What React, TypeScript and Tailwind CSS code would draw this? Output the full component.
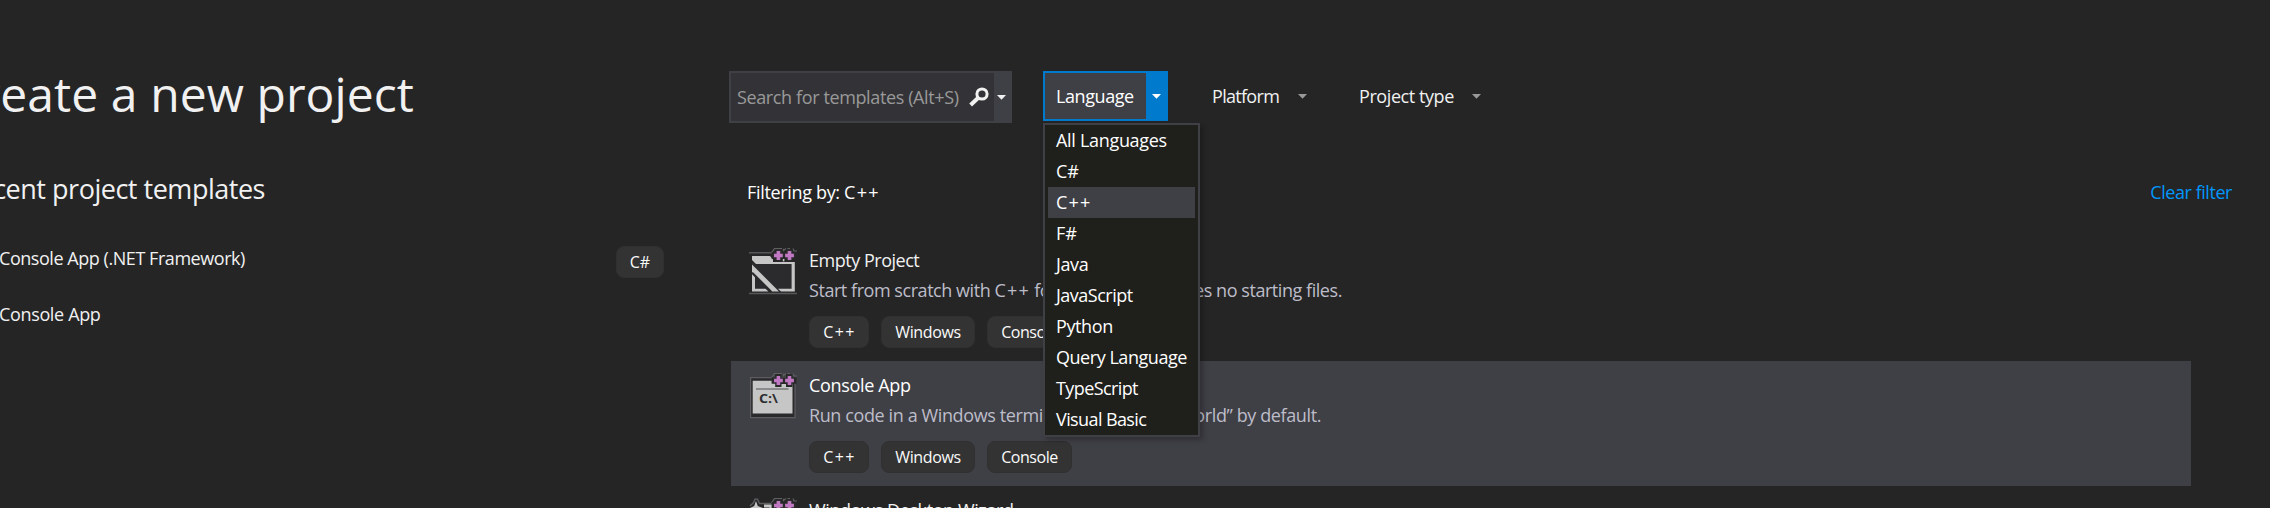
import type { ReactNode } from "react";

type Kind = "empty" | "console" | "wizard";

function Caret({ className }: { className: string }) {
  return (
    <svg width="9" height="5" viewBox="0 0 9 5" className={className}>
      <path d="M0 0H9L4.5 4.7Z" fill="currentColor" />
    </svg>
  );
}

function Cpp() {
  return <span className="tracking-[1.2px]">C++</span>;
}

function SearchIcon() {
  return (
    <svg width="20" height="20" viewBox="0 0 20 20" className="shrink-0 text-[#f1f1f1]">
      <circle cx="13" cy="7" r="5.1" fill="none" stroke="currentColor" strokeWidth="3" />
      <path d="M9.3 10.7L1.6 18" stroke="currentColor" strokeWidth="4" />
    </svg>
  );
}

function PlusBadge() {
  return (
    <g>
      <path
        d="M22 5.5L25.5 0.6H33M34.5 0.8V2.5L37 0.6M38.5 0.6H41M44 0.6L45 3H48"
        fill="none"
        stroke="#606062"
        strokeWidth="1.2"
      />
      <path
        d="M26.2 1H32.5V4.5H37V1H43.5V4.2H47.5V10.8H43.5V14H37V11H32.5V14H26.2V10.8H22.6V4.2H26.2Z"
        fill="#29292a"
      />
      <path
        d="M29.4 3V12M25 7.5H33.8M40.5 3V12M36.1 7.5H44.9"
        fill="none"
        stroke="#c078c2"
        strokeWidth="3.6"
      />
    </g>
  );
}

function ProjectIcon({ kind }: { kind: Kind }) {
  return (
    <svg width="48" height="48" viewBox="0 0 48 48" className="mt-3 ml-[18px] shrink-0">
      {kind === "empty" && (
        <g>
          <path d="M0 4.8H22M0 45.5H48" stroke="#57575a" strokeWidth="1.5" />
          <path d="M3 14H45V43H3Z" fill="#2b2b2e" />
          <path
            d="M3 8H21L24 11.5V14H45.8V43.5H32L29 40.8H42.6V16H7L3 12Z"
            fill="#c6c6c6"
          />
          <path d="M3 23L6 26V40.8H16.5L19.5 43.5H3Z" fill="#c6c6c6" />
          <path d="M3 16.5L30 43.5H23L3 23.5Z" fill="#c6c6c6" />
          <path d="M3 24.8L22 43.8" stroke="#29292b" strokeWidth="2.2" />
          <path d="M34.6 13.4V11" stroke="#c6c6c6" strokeWidth="1.6" />
        </g>
      )}
      {kind === "console" && (
        <g>
          <path d="M1.6 4.6H46V44.6H1.6Z" fill="#2a2a2c" stroke="#5e5e61" strokeWidth="1.2" />
          <path d="M3.7 7.8H43.5V40.4H3.7Z" fill="#c6c6c6" />
          <path d="M7 16H39.5" stroke="#77777a" strokeWidth="1.6" />
          <text
            x="10"
            y="30"
            textLength="19"
            lengthAdjust="spacingAndGlyphs"
            className="fill-[#2d2d30] font-['Open_Sans',sans-serif] text-[12px] font-bold"
          >
            C:\
          </text>
        </g>
      )}
      {kind === "wizard" && (
        <g>
          <path d="M1 8L4.5 4.5L6 1.2H8.5L10.5 5.5H22" fill="none" stroke="#606062" strokeWidth="1.3" />
          <path d="M7 3L8.8 8L14 10L8.8 12L7 17L5.2 12L1 10L5.2 8Z" fill="#c6c6c6" />
          <path d="M15 8H22V11H45V43H4V20" fill="none" stroke="#c6c6c6" strokeWidth="3" />
        </g>
      )}
      <PlusBadge />
    </svg>
  );
}

function Tag({ children, className }: { children: ReactNode; className: string }) {
  return (
    <span
      className={`flex h-8 shrink-0 items-center justify-center rounded-lg border border-[#303031] bg-[#333334] text-[16px] text-[#fafafa] ${className}`}
    >
      {children}
    </span>
  );
}

function Template({
  kind,
  title,
  text,
  selected = false,
}: {
  kind: Kind;
  title: ReactNode;
  text: ReactNode;
  selected?: boolean;
}) {
  return (
    <li className={`flex h-[125px] w-[1460px] shrink-0 ${selected ? "bg-[#3f3f46]" : ""}`}>
      <ProjectIcon kind={kind} />
      <div className="flex flex-col pt-3 pl-3">
        <h3 className={`leading-6 ${selected ? "text-white" : "text-[#f1f1f1]"}`}>{title}</h3>
        <p className="mt-1.5 leading-6 text-[#bdbdc9]">{text}</p>
        <div className="mt-3.5 flex gap-3">
          <Tag className="w-[60px] pl-px tracking-[1.3px]">C++</Tag>
          <Tag className="w-[94px] tracking-[-0.4px]">Windows</Tag>
          <Tag className="w-[85px] tracking-[-0.45px]">Console</Tag>
        </div>
      </div>
    </li>
  );
}

const languages: { name: string; tracking: string }[] = [
  { name: "All Languages", tracking: "tracking-[-0.31px]" },
  { name: "C#", tracking: "" },
  { name: "C++", tracking: "tracking-[1.2px]" },
  { name: "F#", tracking: "" },
  { name: "Java", tracking: "tracking-[-0.4px]" },
  { name: "JavaScript", tracking: "tracking-[-0.5px]" },
  { name: "Python", tracking: "tracking-[-0.4px]" },
  { name: "Query Language", tracking: "tracking-[-0.46px]" },
  { name: "TypeScript", tracking: "tracking-[-0.6px]" },
  { name: "Visual Basic", tracking: "tracking-[-0.6px]" },
];

function LanguageFilter() {
  return (
    <div className="relative ml-[31px]">
      <button className="flex h-[50px] w-[125px] border-2 border-[#007acc] bg-[#3f3f46] text-white">
        <span className="flex h-full w-[101px] items-center pt-px pl-[11px] tracking-[-0.42px]">Language</span>
        <span className="flex h-full grow items-center justify-center bg-[#007acc]">
          <Caret className="mt-px" />
        </span>
      </button>
      <ul className="absolute top-[52px] left-0 z-10 w-[157px] border-2 border-[#3f3f46] bg-[#1f1f1c] px-[3px] text-white shadow-[3px_3px_5px_rgba(0,0,0,0.25)]">
        {languages.map(({ name, tracking }) => (
          <li
            key={name}
            className={`flex h-[31px] items-center pl-2 ${tracking} ${name === "C++" ? "bg-[#3f3f46]" : ""}`}
          >
            {name}
          </li>
        ))}
      </ul>
    </div>
  );
}

export default function App() {
  return (
    <main className="flex h-[508px] w-[2270px] overflow-hidden bg-[#252526] font-['Open_Sans','Noto_Sans',sans-serif] text-[18px] whitespace-nowrap text-[#f1f1f1]">
      <section className="w-[729px] shrink-0 overflow-hidden pt-[62px]">
        <div className="flex w-[414px] justify-end">
          <h1 className="text-[48px] leading-[64px] tracking-[0.07px]">Create a new project</h1>
        </div>
        <div className="mt-[45px] flex w-[265px] justify-end">
          <h2 className="text-[27px] leading-9 tracking-[-0.48px]">Recent project templates</h2>
        </div>
        <div className="mt-[39px] flex h-14 w-[664px] items-start justify-between">
          <span className="-ml-px leading-6 tracking-[-0.45px]">Console App (.NET Framework)</span>
          <Tag className="w-12">C#</Tag>
        </div>
        <div className="-ml-px leading-6 tracking-[-0.35px]">Console App</div>
      </section>

      <section className="flex grow flex-col pt-[71px]">
        <div className="flex h-[52px] shrink-0 items-start">
          <div className="flex h-[52px] w-[283px] border-2 border-[#3f3f46] bg-[#333337]">
            <div className="flex w-[263px] items-center justify-between pr-[5px] pl-1.5">
              <span className="tracking-[-0.38px] text-[#999999]">Search for templates (Alt+S)</span>
              <SearchIcon />
            </div>
            <div className="flex grow items-center justify-center bg-[#3f3f46]">
              <Caret className="mr-px" />
            </div>
          </div>
          <LanguageFilter />
          <div className="ml-[44px] flex h-[50px] w-[95px] items-center justify-between pt-px">
            <span className="tracking-[-0.7px]">Platform</span>
            <Caret className="text-[#999999]" />
          </div>
          <div className="ml-[52px] flex h-[50px] w-[122px] items-center justify-between pt-px">
            <span className="tracking-[-0.42px]">Project type</span>
            <Caret className="text-[#999999]" />
          </div>
        </div>

        <div className="mt-[57px] flex h-6 w-[1503px] shrink-0 justify-between pl-[18px] leading-6">
          <span className="tracking-[-0.33px] text-white">
            Filtering by: <Cpp />
          </span>
          <a className="tracking-[-0.45px] text-[#0097fb]">Clear filter</a>
        </div>

        <ul className="mt-8 ml-0.5 flex flex-col">
          <Template
            kind="empty"
            title={<span className="tracking-[-0.48px]">Empty Project</span>}
            text={
              <span className="tracking-[-0.45px]">
                Start from scratch with <Cpp /> for Windows. Provides no starting files.
              </span>
            }
          />
          <Template
            kind="console"
            selected
            title={<span className="tracking-[-0.33px]">Console App</span>}
            text={
              <span className="tracking-[-0.39px]">
                Run code in a Windows terminal. Prints “Hello World” by default.
              </span>
            }
          />
          <Template
            kind="wizard"
            title={<span className="tracking-[-0.4px]">Windows Desktop Wizard</span>}
            text="Create your own Windows app using a wizard."
          />
        </ul>
      </section>
    </main>
  );
}
